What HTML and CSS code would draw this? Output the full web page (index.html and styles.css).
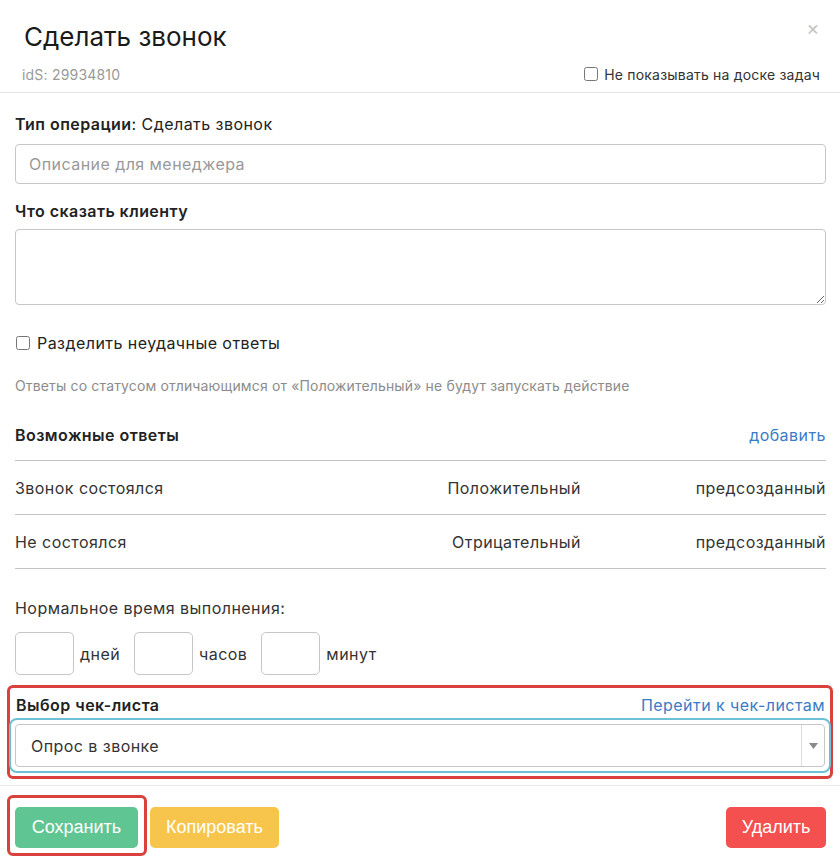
FILE: index.html
```html
<!DOCTYPE html>
<html lang="ru">
<head>
<meta charset="utf-8">
<link rel="stylesheet" href="styles.css">
</head>
<body>
<div class="modal">
  <div class="header">
    <h1 class="title">Сделать звонок</h1>
    <span class="close">×</span>
    <div class="meta">
      <span class="ids">idS: 29934810</span>
      <label class="hide-check"><input type="checkbox"> Не показывать на доске задач</label>
    </div>
  </div>
  <div class="body">
    <div class="label op-label"><b>Тип операции</b>: Сделать звонок</div>
    <input class="field desc" type="text" placeholder="Описание для менеджера">
    <div class="label say-label"><b>Что сказать клиенту</b></div>
    <textarea class="field area"></textarea>
    <label class="split"><input type="checkbox"> Разделить неудачные ответы</label>
    <div class="hint">Ответы со статусом отличающимся от «Положительный» не будут запускать действие</div>
    <div class="answers-head">
      <b>Возможные ответы</b>
      <a class="link">добавить</a>
    </div>
    <div class="row">
      <span>Звонок состоялся</span>
      <span class="status">Положительный</span>
      <span class="kind">предсозданный</span>
    </div>
    <div class="row">
      <span>Не состоялся</span>
      <span class="status">Отрицательный</span>
      <span class="kind">предсозданный</span>
    </div>
    <div class="time-label">Нормальное время выполнения:</div>
    <div class="time-row">
      <input class="field tbox" type="text"><span>дней</span>
      <input class="field tbox" type="text"><span>часов</span>
      <input class="field tbox" type="text"><span>минут</span>
    </div>
    <div class="checklist">
      <div class="cl-head">
        <b>Выбор чек-листа</b>
        <a class="link">Перейти к чек-листам</a>
      </div>
      <div class="focus-ring">
        <div class="select">
          <span class="sel-text">Опрос в звонке</span>
          <span class="sel-arrow"><svg width="9" height="6" viewBox="0 0 9 6"><path d="M0 0h9L4.5 6z" fill="#8a8a8a"/></svg></span>
        </div>
      </div>
    </div>
  </div>
  <div class="footer">
    <div class="save-mark"><button class="btn green">Сохранить</button></div>
    <button class="btn yellow">Копировать</button>
    <button class="btn red">Удалить</button>
  </div>
</div>
</body>
</html>
```

FILE: styles.css
```css
* { box-sizing: border-box; }
html, body { margin: 0; background: #fff; }
body {
  font-family: Inter, "Noto Sans", sans-serif;
  color: #222;
  font-size: 16px;
  letter-spacing: 0.45px;
}
b { font-weight: 600; }
.modal { width: 840px; }
.header {
  position: relative;
  padding: 22px 20px 8px 22px;
  border-bottom: 1px solid #e5e5e5;
}
.title {
  margin: 0 0 0 2px;
  font-size: 26px;
  line-height: 30px;
  font-weight: 400;
  letter-spacing: 0;
  color: #1a1a1a;
}
.close {
  position: absolute;
  top: 16px;
  right: 20px;
  font-size: 20px;
  color: #c4c4c4;
  line-height: 24px;
}
.meta {
  display: flex;
  justify-content: space-between;
  align-items: center;
  margin-top: 12px;
  height: 20px;
}
.ids { font-size: 14px; color: #999; letter-spacing: 0.2px; }
.hide-check {
  font-size: 14px;
  letter-spacing: 0.2px;
  color: #333;
  display: flex;
  align-items: center;
  gap: 6px;
}
.hide-check input, .split input { margin: 0; width: 14px; height: 14px; }
.body { padding: 0 14px 0 15px; }
.label { line-height: 22px; }
.op-label { margin-top: 20px; }
.field {
  display: block;
  width: 100%;
  border: 1px solid #c6c6c6;
  border-radius: 4px;
  font-family: inherit;
  font-size: 16px;
  letter-spacing: 0.45px;
  background: #fff;
}
.desc {
  margin-top: 9px;
  height: 40px;
  padding: 0 13px;
  color: #333;
}
.desc::placeholder { color: #999; }
.say-label { margin-top: 16px; }
.area { margin-top: 7px; height: 76px; resize: vertical; }
.split {
  display: flex;
  align-items: center;
  gap: 7px;
  margin-top: 27px;
  line-height: 22px;
  margin-left: 1px;
}
.hint {
  margin-top: 22px;
  font-size: 14px;
  line-height: 20px;
  letter-spacing: 0.15px;
  color: #8c8c8c;
}
.answers-head {
  display: flex;
  justify-content: space-between;
  align-items: center;
  margin-top: 28px;
  line-height: 22px;
  padding-bottom: 14px;
  border-bottom: 1px solid #c3c3c3;
}
.link { color: #3a7bc6; text-decoration: none; }
.row {
  display: grid;
  grid-template-columns: 1fr auto 245px;
  align-items: center;
  height: 54px;
  border-bottom: 1px solid #c3c3c3;
  color: #333;
}
.status { text-align: right; }
.kind { text-align: right; }
.time-label { margin-top: 28px; line-height: 22px; color: #333; }
.time-row {
  display: flex;
  align-items: center;
  margin-top: 13px;
  color: #333;
}
.tbox { width: 59px; height: 43px; border-radius: 5px; }
.time-row span { margin: 0 14px 0 6px; }
.checklist {
  margin: 10px -7px 0 -8px;
  border: 3px solid #d8413c;
  border-radius: 6px;
  padding: 6px 0 3px;
}
.cl-head {
  display: flex;
  justify-content: space-between;
  align-items: center;
  line-height: 22px;
  padding: 0 5px 0 6px;
  margin-bottom: 2px;
}
.focus-ring {
  margin: 0 -1px;
  border: 2px solid #6cc1d6;
  border-radius: 8px;
  padding: 4px;
}
.select {
  display: flex;
  align-items: center;
  height: 43px;
  border: 1px solid #c6c6c6;
  border-radius: 4px;
}
.sel-text { flex: 1; padding-left: 15px; color: #333; }
.sel-arrow {
  width: 23px;
  height: 100%;
  border-left: 1px solid #ddd;
  display: flex;
  align-items: center;
  justify-content: center;
}
.footer {
  margin-top: 6px;
  border-top: 1px solid #e8e8e8;
  padding: 9px 14px 0 7px;
  display: flex;
  align-items: flex-start;
}
.save-mark {
  border: 3px solid #d8413c;
  border-radius: 6px;
  padding: 9px 6px 5px 5px;
}
.btn {
  border: none;
  border-radius: 5px;
  height: 41px;
  color: #fff;
  font-family: "Liberation Sans", Arial, sans-serif;
  font-size: 18px;
  letter-spacing: 0;
  padding: 0 12px;
}
.green { background: #5fc592; width: 123px; }
.yellow { background: #f7c54c; width: 129px; margin-top: 12px; margin-left: 3px; }
.red { background: #f4504f; width: 100px; margin-top: 12px; margin-left: auto; }
```
